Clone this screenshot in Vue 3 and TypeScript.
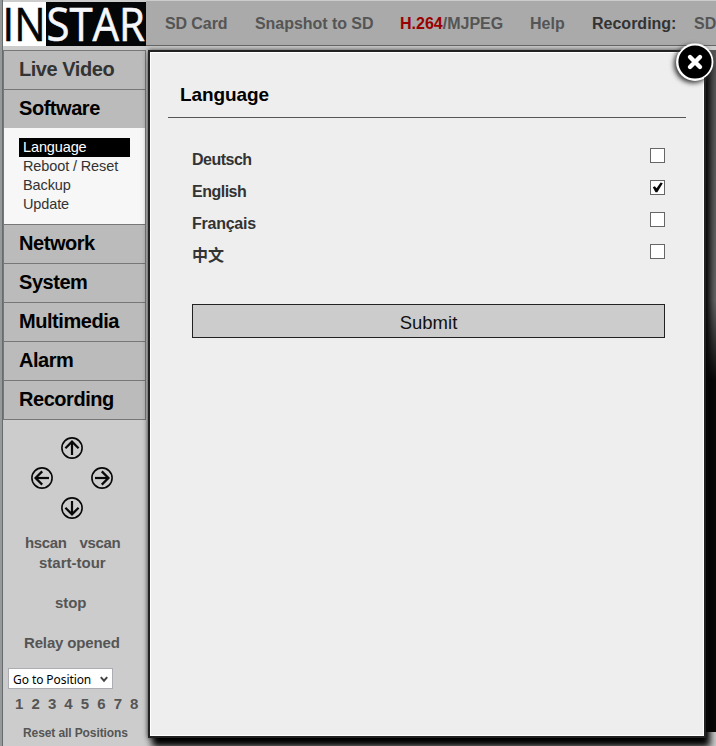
<script setup lang="ts">
import { ref } from 'vue'

const menuBefore = ['Live Video', 'Software']
const menuAfter = ['Network', 'System', 'Multimedia', 'Alarm', 'Recording']
const submenu = ['Language', 'Reboot / Reset', 'Backup', 'Update']
const languages = ['Deutsch', 'English', 'Français', '中文']
const selected = ref('English')
const open = ref(true)
const arrows = [
  { name: 'up', angle: 0 },
  { name: 'left', angle: 270 },
  { name: 'right', angle: 90 },
  { name: 'down', angle: 180 },
]
</script>

<template>
  <div class="page">
    <header class="top">
      <svg class="logo" viewBox="0 0 143 44" width="143" height="44">
        <rect width="43" height="44" fill="#fff" />
        <rect x="43" width="100" height="44" fill="#030507" />
        <text x="-0.5" y="39" textLength="43" lengthAdjust="spacingAndGlyphs" fill="#030507" stroke="#030507">IN</text>
        <text x="43.5" y="39" textLength="98.5" lengthAdjust="spacingAndGlyphs" fill="#f6f7fb" stroke="#f6f7fb">STAR</text>
      </svg>
      <nav class="bar">
        <span class="sd">SD Card</span>
        <span class="snap">Snapshot to SD</span>
        <span class="codec"><b>H.264</b>/MJPEG</span>
        <span class="help">Help</span>
        <span class="rec">Recording:</span>
        <span>SD</span>
      </nav>
    </header>

    <div class="body">
      <aside class="side">
        <ul class="menu">
          <li v-for="m in menuBefore" :key="m" :class="{ soft: m === 'Live Video' }">{{ m }}</li>
          <li class="sub">
            <a v-for="(s, i) in submenu" :key="s" :class="{ on: i === 0 }">{{ s }}</a>
          </li>
          <li v-for="m in menuAfter" :key="m">{{ m }}</li>
        </ul>
        <div class="pad">
          <svg v-for="a in arrows" :key="a.name" :class="a.name" viewBox="0 0 22 22" width="22" height="22">
            <g :transform="`rotate(${a.angle} 11 11)`" fill="none" stroke="#080808">
              <circle cx="11" cy="11" r="10.1" stroke-width="1.6" />
              <path d="M11 18V5" stroke-width="2.2" />
              <path d="M4.4 11.2 11 4.6l6.6 6.6" stroke-width="2.3" />
            </g>
          </svg>
        </div>
        <div class="cmd scan"><span>hscan</span><span>vscan</span></div>
        <div class="cmd tour">start-tour</div>
        <div class="cmd stop">stop</div>
        <div class="cmd relay">Relay opened</div>
        <div class="select">
          <span>Go to Position</span>
          <svg viewBox="0 0 8 7" width="8" height="7"><path d="M.8 1.2 4 4.7l3.2-3.5" fill="none" stroke="#444" stroke-width="2" /></svg>
        </div>
        <div class="positions"><span v-for="n in 8" :key="n">{{ n }}</span></div>
        <div class="reset">Reset all Positions</div>
      </aside>
      <main class="video"></main>
    </div>

    <section v-if="open" class="modal">
      <h2>Language</h2>
      <div class="form">
        <label v-for="l in languages" :key="l" @click="selected = l">
          <span>{{ l }}</span>
          <i class="box">
            <svg v-if="selected === l" viewBox="0 0 13 13" width="13" height="13">
              <path d="M1.8 6.2 3.8 5.2 5.6 7.3 9.6 1.6l2.2.6-5.5 9H4.5Z" fill="#080808" />
            </svg>
          </i>
        </label>
        <button>Submit</button>
      </div>
      <svg class="close" viewBox="0 0 38 38" width="38" height="38" @click="open = false">
        <circle cx="19" cy="19" r="17.5" fill="#000" stroke="#fff" stroke-width="1.8" />
        <path d="m14 14 10 10M24 14 14 24" stroke="#fff" stroke-width="4.4" stroke-linecap="round" />
      </svg>
    </section>
  </div>
</template>

<style>
body {
  margin: 0;
  overflow: hidden;
}
</style>

<style scoped>
.page {
  position: relative;
  box-sizing: border-box;
  width: 716px;
  height: 746px;
  overflow: hidden;
  background: linear-gradient(90deg, #999 0 2px, #666d70 2px 3px, #ccc 3px);
  padding-left: 3px;
  font-family: "Liberation Sans", Arial, sans-serif;
}
.top {
  display: flex;
  height: 46px;
  box-sizing: border-box;
  border-top: 1px solid #ccc;
}
.logo {
  flex: none;
  margin-top: 1px;
  font-family: "Open Sans", "Noto Sans", sans-serif;
  font-size: 45px;
  stroke-width: 0.6px;
}
.bar {
  display: flex;
  flex: 1;
  box-sizing: border-box;
  height: 45px;
  padding-left: 19px;
  background: #aaa;
  border-bottom: 1px solid #666;
  color: #555;
  font-size: 16px;
  font-weight: bold;
  line-height: 45px;
  white-space: nowrap;
  overflow: hidden;
}
.bar span { flex: none; }
.bar .sd { width: 90px; letter-spacing: -0.1px; }
.bar .snap { width: 145px; letter-spacing: -0.05px; }
.bar .codec { width: 130px; }
.codec b { color: #900; }
.bar .help { width: 62px; }
.bar .rec { width: 102px; color: #333; }
.body {
  display: flex;
  height: 700px;
}
.side {
  flex: none;
  width: 143px;
  padding-top: 4px;
}
.menu {
  margin: 0;
  padding: 0;
  list-style: none;
  box-sizing: border-box;
  height: 370px;
  border: 1px solid #777;
  background: #bbb;
}
.menu li {
  box-sizing: border-box;
  height: 39px;
  padding-left: 15px;
  border-bottom: 1px solid #777;
  font-size: 20px;
  letter-spacing: -0.45px;
  line-height: 37px;
  font-weight: bold;
  color: #000;
}
.menu li:last-child { border: 0; height: 38px; }
.menu li.soft { color: #333; }
.menu li:nth-child(2) { border-bottom: 0; height: 38px; }
.menu li.sub {
  height: 97px;
  padding: 10px 15px;
  background: #f7f7f7;
  line-height: 19px;
  font-weight: normal;
  letter-spacing: -0.12px;
}
.sub a {
  display: block;
  height: 19px;
  padding-left: 4px;
  color: #333;
  font-size: 14.5px;
}
.sub .on { background: #000; color: #fff; }
.pad {
  display: grid;
  grid-template: repeat(3, 30px) / repeat(3, 30px);
  place-items: center;
  margin: 13px 0 0 24px;
  height: 90px;
}
.up { grid-area: 1 / 2; }
.left { grid-area: 2 / 1; }
.right { grid-area: 2 / 3; }
.down { grid-area: 3 / 2; }
.cmd {
  height: 20px;
  line-height: 20px;
  font-size: 15px;
  font-weight: bold;
  color: #555;
}
.scan {
  display: flex;
  gap: 13px;
  margin-top: 10px;
  padding-left: 22px;
  letter-spacing: -0.35px;
}
.tour { padding-left: 36px; }
.stop { margin-top: 20px; padding-left: 52px; letter-spacing: -0.1px; }
.relay { margin-top: 20px; padding-left: 21px; letter-spacing: -0.15px; }
.select {
  display: flex;
  align-items: center;
  justify-content: space-between;
  box-sizing: border-box;
  width: 105px;
  height: 21px;
  margin: 15px 0 0 5px;
  padding: 1px 4px 0;
  border: 1px solid #abadb3;
  background: #fff;
  font: 12px "Noto Sans", sans-serif;
  letter-spacing: -0.08px;
  white-space: nowrap;
}
.positions {
  display: grid;
  grid-template-columns: repeat(8, 16.45px);
  height: 28px;
  padding-left: 12px;
  line-height: 29px;
  font-size: 15px;
  font-weight: bold;
  color: #555;
}
.reset {
  margin-top: 6px;
  padding-left: 20px;
  line-height: 20px;
  font-size: 12px;
  letter-spacing: -0.1px;
  font-weight: bold;
  color: #555;
  white-space: nowrap;
}
.video {
  flex: 1;
  height: 682px;
  margin: 4px 0 0 4px;
  background: linear-gradient(180deg, #555 0, #666 250px, #090807 330px, #090807);
}
.modal {
  position: absolute;
  left: 148px;
  top: 50px;
  box-sizing: border-box;
  width: 558px;
  height: 688px;
  padding: 28px 18px 0 18px;
  border: 2px solid #222;
  background: #eee;
  box-shadow: inset 0 0 0 1px #fff, 4px 9px 7px #000, 0 0 5px #444;
}
.modal h2 {
  margin: 0;
  height: 37px;
  padding-left: 12px;
  border-bottom: 1px solid #555;
  font-size: 19px;
  letter-spacing: -0.1px;
  line-height: 29px;
  color: #000;
}
.form {
  padding: 25px 21px 0 24px;
}
.form label {
  display: flex;
  justify-content: space-between;
  height: 32px;
  font-size: 16px;
  line-height: 33px;
  font-weight: bold;
  color: #333;
  font-family: "Liberation Sans", "Noto Sans CJK SC", sans-serif;
}
.form label span { letter-spacing: -0.5px; }
.form label:nth-child(3) span { letter-spacing: -0.25px; }
.form label:nth-child(4) span { letter-spacing: 0; }
.box {
  box-sizing: border-box;
  width: 15px;
  height: 15px;
  margin-top: 5px;
  border: 1px solid #666;
  background: #fff;
}
.box svg { display: block; }
.form button {
  display: block;
  box-sizing: border-box;
  width: 100%;
  height: 34px;
  margin: 33px 0 0;
  padding: 3px 0 0;
  border: 1px solid #222;
  background: #ccc;
  font: 18.5px "Liberation Sans", sans-serif;
  color: #111;
}
.close {
  position: absolute;
  right: -10px;
  top: -9px;
  overflow: visible;
  border-radius: 50%;
  box-shadow: -2px 2px 5px #333;
}
</style>
